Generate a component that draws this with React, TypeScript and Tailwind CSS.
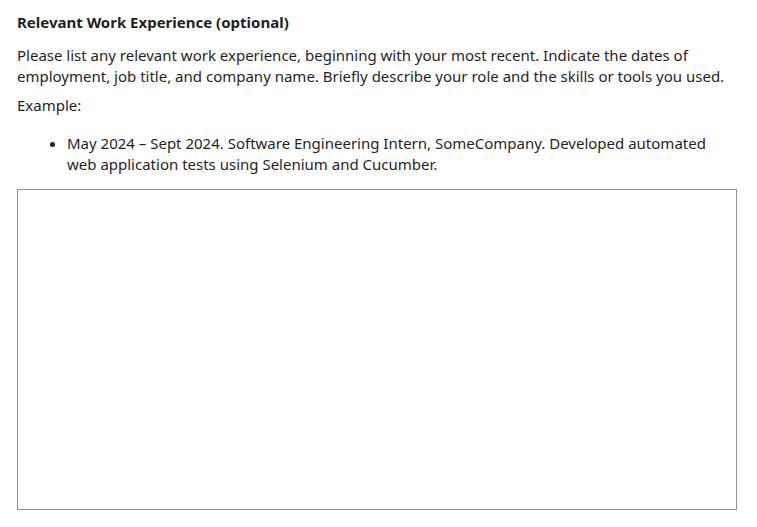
export default function App() {
  return (
    <div className="min-h-screen bg-white pl-[17px] pt-[12px] text-[15px] leading-[21px] text-[#1f1f1f] font-['Segoe_UI','Noto_Sans',sans-serif]">
      <div className="w-[720px]">
        <h3 className="font-bold text-[15px] leading-[21px]">Relevant Work Experience (optional)</h3>
        <p className="mt-[12px]">
          Please list any relevant work experience, beginning with your most recent. Indicate the dates of
          employment, job title, and company name. Briefly describe your role and the skills or tools you used.
        </p>
        <p className="mt-[8px]">Example:</p>
        <ul className="mt-[17px] pl-[50px] list-disc">
          <li>
            May 2024 – Sept 2024. Software Engineering Intern, SomeCompany. Developed automated web
            application tests using Selenium and Cucumber.
          </li>
        </ul>
        <textarea className="mt-[14px] block w-[720px] h-[321px] border border-[#8f8f8f] resize-none" />
      </div>
    </div>
  );
}
